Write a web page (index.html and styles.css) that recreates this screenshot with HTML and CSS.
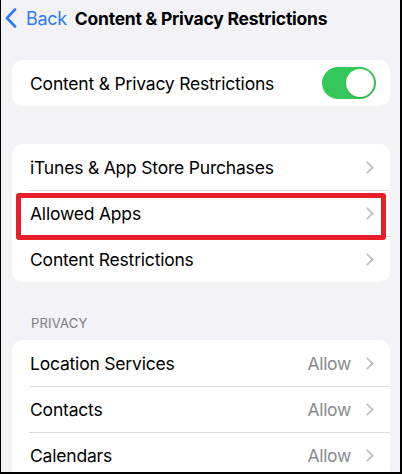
FILE: index.html
```html
<!DOCTYPE html>
<html lang="en">
<head>
  <meta charset="UTF-8" />
  <meta name="viewport" content="width=device-width, initial-scale=1.0"/>
  <title>Content &amp; Privacy Restrictions</title>
  <link rel="stylesheet" href="styles.css">
</head>
<body>

  <div class="screen">
    <div class="nav">
      <a class="back" href="#">
        <svg class="back-icon" width="12" height="20" viewBox="0 0 12 20">
          <path d="M10 1.5 L2 10 L10 18.5" fill="none" stroke="#2f7cf6" stroke-width="2.6" stroke-linecap="round" stroke-linejoin="round"/>
        </svg>
        <span>Back</span>
      </a>
      <h1>Content &amp; Privacy Restrictions</h1>
    </div>

    <div class="group first">
      <div class="row">
        <span class="label">Content &amp; Privacy Restrictions</span>
        <span class="toggle on"><span class="knob"></span></span>
      </div>
    </div>

    <div class="group">
      <div class="row">
        <span class="label">iTunes &amp; App Store Purchases</span>
        <span class="chevron"></span>
      </div>
      <div class="row highlighted">
        <span class="label">Allowed Apps</span>
        <span class="chevron"></span>
        <span class="mark"></span>
      </div>
      <div class="row">
        <span class="label">Content Restrictions</span>
        <span class="chevron"></span>
      </div>
    </div>

    <div class="section-title">PRIVACY</div>
    <div class="group">
      <div class="row">
        <span class="label">Location Services</span>
        <span class="value">Allow</span>
        <span class="chevron"></span>
      </div>
      <div class="row">
        <span class="label">Contacts</span>
        <span class="value">Allow</span>
        <span class="chevron"></span>
      </div>
      <div class="row">
        <span class="label">Calendars</span>
        <span class="value">Allow</span>
        <span class="chevron"></span>
      </div>
    </div>
  </div>

</body>
</html>
```

FILE: styles.css
```css
html, body {
  margin: 0;
  padding: 0;
}
body {
  font-family: Inter, "Liberation Sans", Arial, sans-serif;
  color: #000;
  background: #f2f2f7;
}
.screen {
  box-sizing: border-box;
  width: 402px;
  height: 474px;
  overflow: hidden;
  background: #f2f2f7;
  border-left: 1px solid #000;
  border-right: 2px solid #000;
  border-bottom: 2px solid #000;
  padding: 0 10px 0 11px;
}
.nav {
  display: flex;
  align-items: center;
  height: 36px;
  margin-left: -7px;
}
.back {
  display: flex;
  align-items: center;
  gap: 9px;
  color: #2f7cf6;
  text-decoration: none;
  font-size: 18px;
  letter-spacing: -0.3px;
  margin-right: 8px;
}
.nav h1 {
  margin: 0;
  font-size: 17.5px;
  font-weight: 700;
  letter-spacing: -0.25px;
}
.group {
  background: #fff;
  border-radius: 10px;
  margin-top: 38px;
}
.group.first {
  margin-top: 24px;
}
.row {
  position: relative;
  display: flex;
  align-items: center;
  height: 46px;
  padding: 0 17px 0 18px;
  font-size: 17.5px;
  letter-spacing: -0.2px;
}
.row + .row::before {
  content: "";
  position: absolute;
  top: 0;
  left: 17px;
  right: 0;
  height: 1px;
  background: #dcdce0;
}
.label {
  flex: 1;
}
.value {
  color: #8a8a8e;
  margin-right: 12px;
  letter-spacing: -0.3px;
}
.chevron {
  width: 7px;
  height: 7px;
  border-top: 2px solid #c4c4c7;
  border-right: 2px solid #c4c4c7;
  transform: rotate(45deg);
  margin-right: 1px;
}
.toggle {
  position: relative;
  width: 54px;
  height: 32px;
  border-radius: 16px;
  background: #34c759;
  margin-right: -3px;
}
.knob {
  position: absolute;
  top: 2px;
  right: 2px;
  width: 28px;
  height: 28px;
  border-radius: 50%;
  background: #fff;
  box-shadow: 0 1px 2px rgba(0, 0, 0, 0.15);
}
.mark {
  position: absolute;
  z-index: 1;
  left: 4px;
  right: 4px;
  top: 3px;
  bottom: -4px;
  border: 5px solid #e81e2a;
  border-radius: 3px;
}
.section-title {
  margin: 33px 0 9px 19px;
  font-size: 13px;
  color: #7c7c80;
  letter-spacing: 0.2px;
}
.section-title + .group {
  margin-top: 0;
}
```
